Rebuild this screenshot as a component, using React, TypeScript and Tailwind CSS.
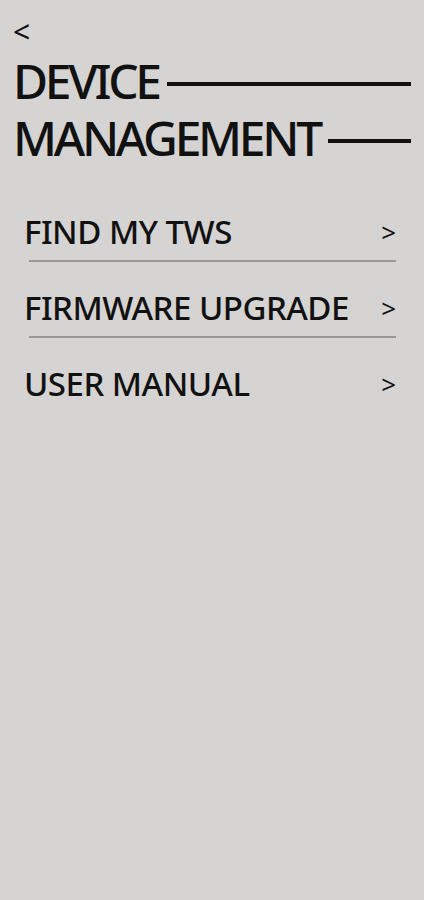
export default function App() {
  const items = ["FIND MY TWS", "FIRMWARE UPGRADE", "USER MANUAL"];

  return (
    <div
      className="w-full min-h-screen bg-[#d5d4d2] text-[#111]"
      style={{ fontFamily: '"Noto Sans", "Open Sans", sans-serif' }}
    >
      <div className="px-[13px] pt-[14px]">
        <button className="block text-[30px] leading-[36px]">&lt;</button>
        <div className="mt-[2px] text-[48px] leading-[57px] tracking-[-3.3px] font-medium">
          <div className="flex items-center gap-[8px]">
            <span>DEVICE</span>
            <span className="flex-1 h-[4px] bg-[#111] mt-[6px]" />
          </div>
          <div className="flex items-center gap-[8px]">
            <span>MANAGEMENT</span>
            <span className="flex-1 h-[4px] bg-[#111] mt-[6px]" />
          </div>
        </div>
      </div>

      <div className="mt-[38px] pl-[24px] pr-[28px]">
        {items.map((label, i) => (
          <div key={label}>
            <div className="flex items-center justify-between h-[56px]">
              <span className="text-[33px] tracking-[-0.5px] font-medium">{label}</span>
              <span className="text-[26px]">&gt;</span>
            </div>
            {i < items.length - 1 && (
              <div className="ml-[5px] h-[2px] bg-[#9a9998] mb-[18px]" />
            )}
          </div>
        ))}
      </div>
    </div>
  );
}
